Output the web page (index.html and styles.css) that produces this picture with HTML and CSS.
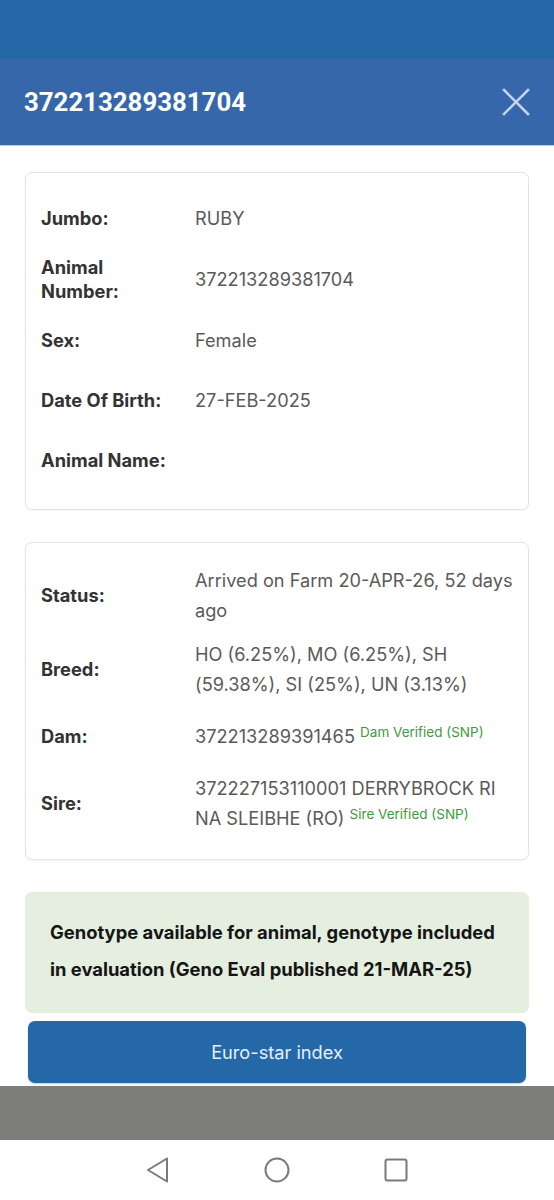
FILE: index.html
```html
<!DOCTYPE html>
<html>
<head>
<meta charset="utf-8">
<link rel="stylesheet" href="styles.css">
</head>
<body>
<div class="screen">
  <div class="statusbar"></div>
  <header class="header">
    <h1 class="title">372213289381704</h1>
    <svg class="close" width="28" height="28" viewBox="0 0 28 28"><path d="M2 2 L26 26 M26 2 L2 26" stroke="#c3d3ec" stroke-width="2.6" stroke-linecap="square" fill="none"/></svg>
  </header>
  <main class="content">
    <section class="card card-first">
      <div class="row"><div class="label">Jumbo:</div><div class="value">RUBY</div></div>
      <div class="row"><div class="label">Animal<br>Number:</div><div class="value">372213289381704</div></div>
      <div class="row"><div class="label">Sex:</div><div class="value">Female</div></div>
      <div class="row"><div class="label">Date Of Birth:</div><div class="value">27-FEB-2025</div></div>
      <div class="row"><div class="label">Animal Name:</div><div class="value"></div></div>
    </section>
    <section class="card card-second">
      <div class="row"><div class="label">Status:</div><div class="value">Arrived on Farm 20-APR-26, 52 days ago</div></div>
      <div class="row"><div class="label">Breed:</div><div class="value">HO (6.25%), MO (6.25%), SH (59.38%), SI (25%), UN (3.13%)</div></div>
      <div class="row"><div class="label">Dam:</div><div class="value">372213289391465 <sup class="verified">Dam Verified (SNP)</sup></div></div>
      <div class="row"><div class="label">Sire:</div><div class="value">372227153110001 DERRYBROCK RI NA SLEIBHE (RO) <sup class="verified">Sire Verified (SNP)</sup></div></div>
    </section>
    <div class="notice">Genotype available for animal, genotype included in evaluation (Geno Eval published 21-MAR-25)</div>
    <button class="btn">Euro-star index</button>
  </main>
  <div class="scrim"></div>
  <nav class="navbar">
    <svg class="nav-back" width="24" height="26" viewBox="0 0 24 26"><path d="M21 1.5 L2 13 L21 24.5 Z" fill="none" stroke="#7a7a7a" stroke-width="2" stroke-linejoin="round"/></svg>
    <svg class="nav-home" width="26" height="26" viewBox="0 0 26 26"><circle cx="13" cy="13" r="11.5" fill="none" stroke="#7a7a7a" stroke-width="2"/></svg>
    <svg class="nav-recent" width="24" height="24" viewBox="0 0 24 24"><rect x="1.5" y="1.5" width="21" height="21" rx="2" fill="none" stroke="#7a7a7a" stroke-width="2"/></svg>
  </nav>
</div>
</body>
</html>
```
FILE: styles.css
```css
* { box-sizing: border-box; }
html, body { margin: 0; padding: 0; background: #fff; }
body { font-family: Inter, Roboto, "Liberation Sans", sans-serif; }
.screen { width: 554px; height: 1200px; display: flex; flex-direction: column; overflow: hidden; }
.statusbar { height: 59px; background: #2568a8; flex: none; }
.header {
  height: 87px; flex: none; background: #3667aa;
  display: flex; align-items: center; justify-content: space-between;
  padding: 0 24px 0 24px; border-bottom: 1px solid #b6cbe8;
}
.title { margin: 0; color: #fff; font-family: Roboto, "Liberation Sans", sans-serif; font-size: 25.8px; font-weight: 700; }
.close { display: block; }
.content { flex: 1; padding: 26px 25px 0; display: flex; flex-direction: column; }
.card {
  border: 1px solid #e2e2e2; border-radius: 7px; background: #fff;
  padding: 15px 15px 19px; margin-bottom: 32px;
  box-shadow: 0 1px 2px rgba(0,0,0,0.04);
}
.row {
  display: grid; grid-template-columns: 154px 1fr; align-items: center;
  min-height: 60px; padding: 7px 0;
}
.label { font-size: 18.3px; font-weight: 700; color: #333; line-height: 24px; }
.value { font-size: 18.2px; color: #5a5a5a; line-height: 30px; }
.verified { font-size: 13.5px; color: #3e9a3e; vertical-align: 6px; line-height: 0; }
.notice {
  background: #e5efdf; border-radius: 7px; padding: 22px 25px 25px;
  font-size: 18.4px; font-weight: 700; color: #151515; line-height: 37px;
}
.btn {
  margin: 8px 3px 0; height: 62px; border: none; border-radius: 7px;
  background: #2568a8; color: #e6efff; font-family: inherit; font-size: 18.2px;
  box-shadow: 0 1px 2px rgba(0,0,0,0.2);
}
.scrim { height: 54px; flex: none; background: #7d7e7c; }
.navbar {
  height: 60px; flex: none; background: #fff;
  display: flex; align-items: center; padding-left: 146px;
}
.nav-back { margin-right: 94px; }
.nav-home { margin-right: 94px; }
```
